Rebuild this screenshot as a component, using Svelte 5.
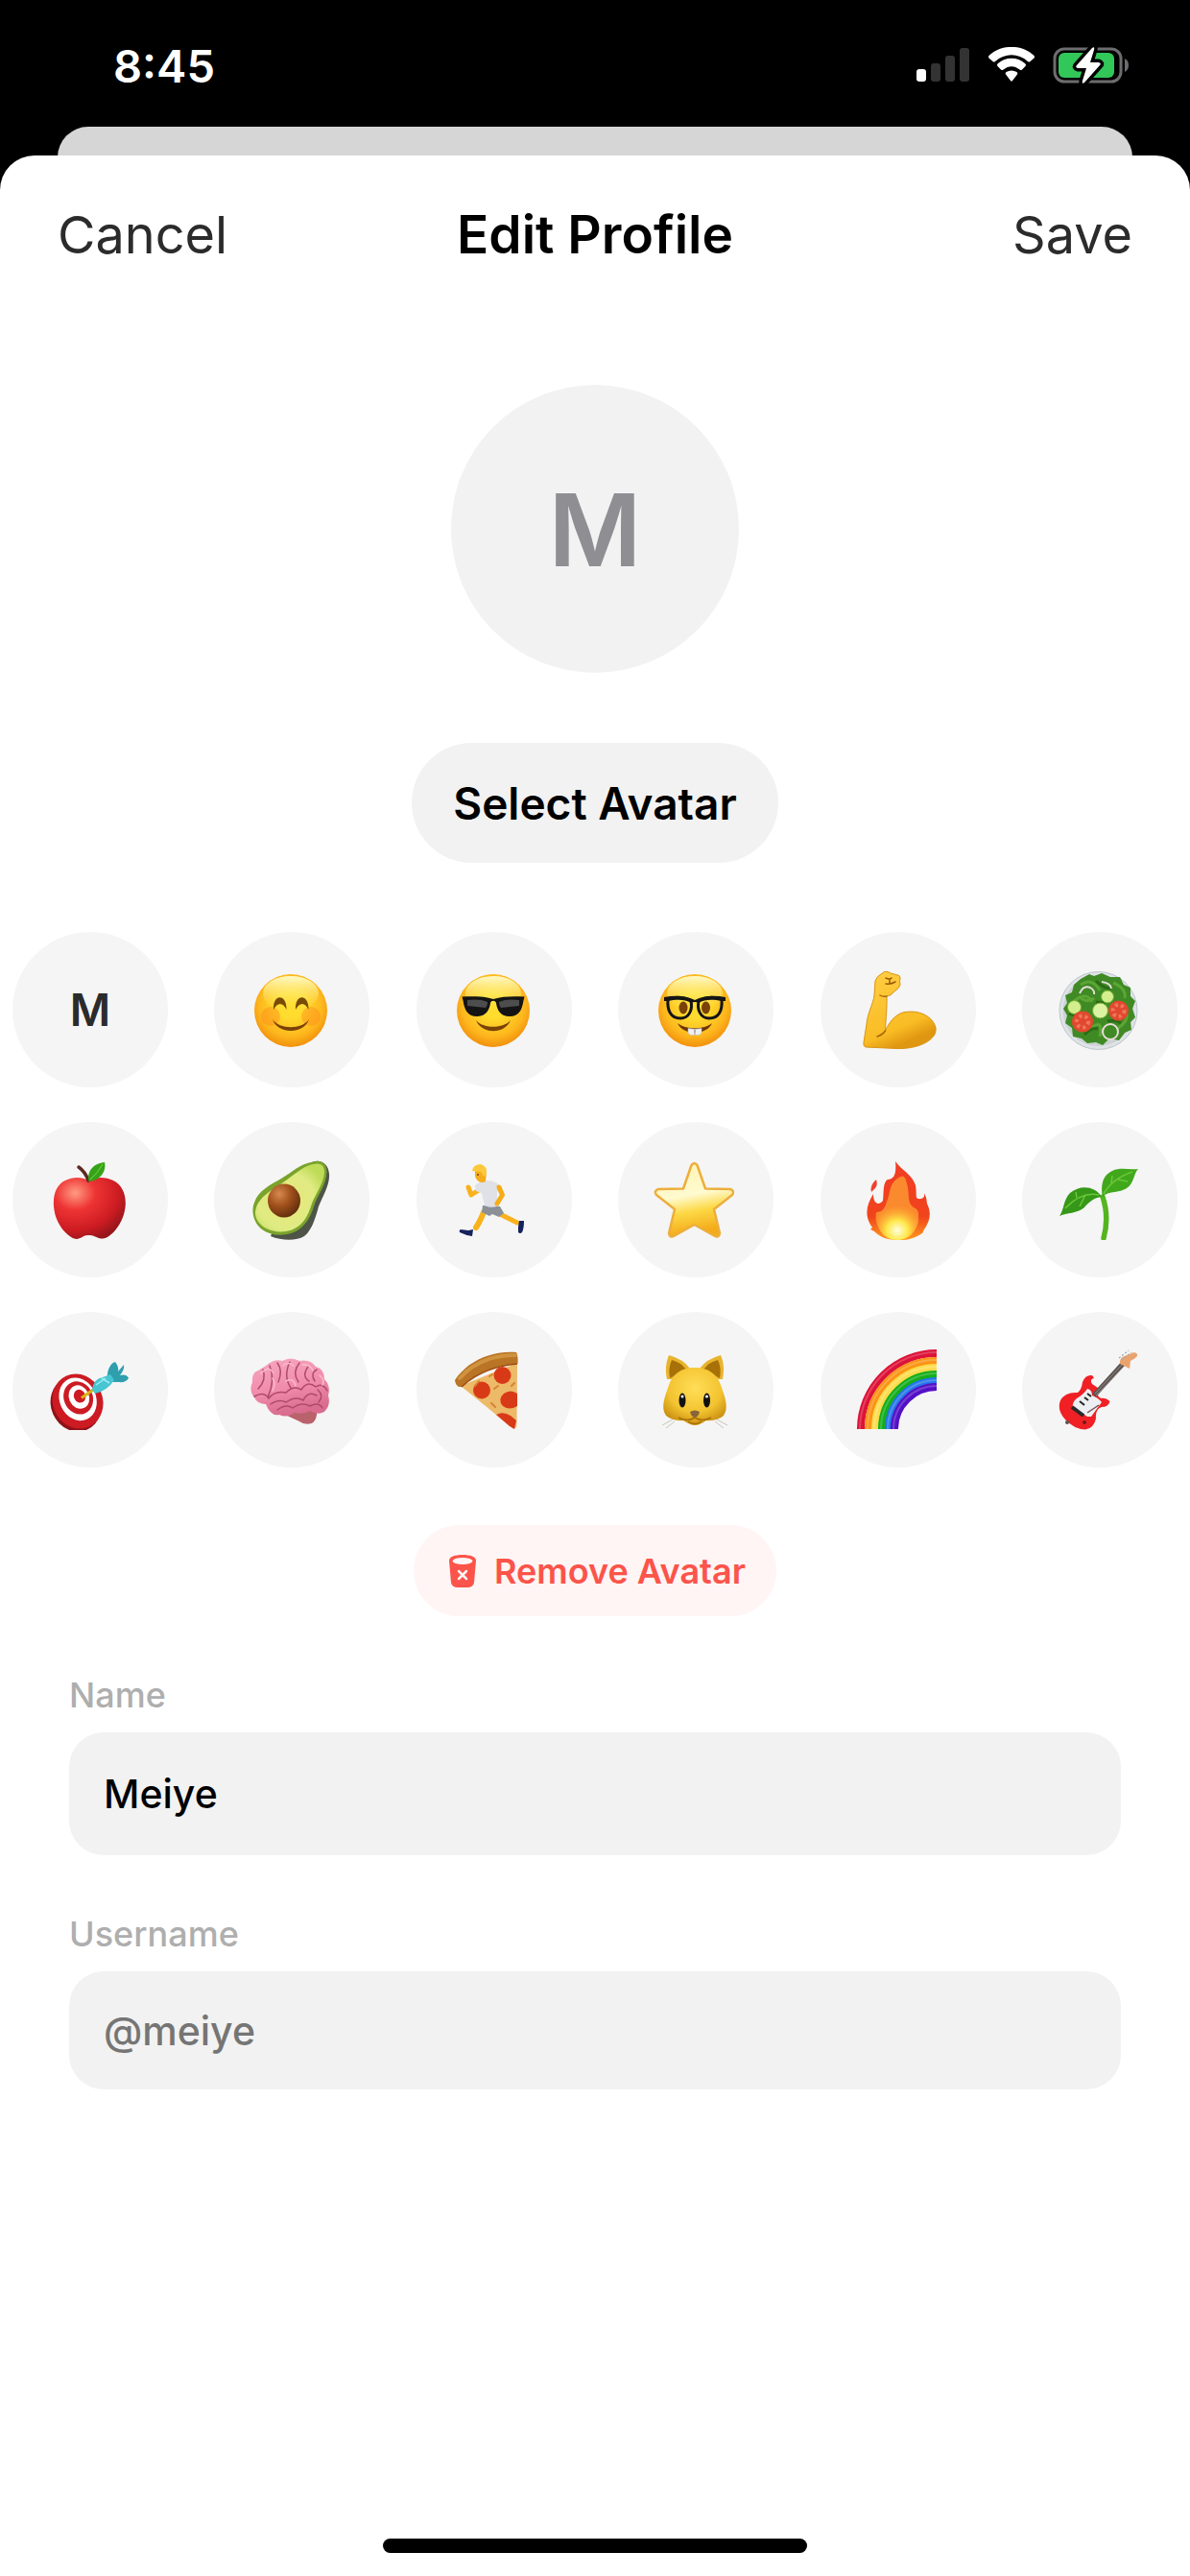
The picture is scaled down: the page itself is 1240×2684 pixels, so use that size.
<script>
    const avatars = [
        'initial', 'smile', 'sunglasses', 'nerd', 'muscle', 'salad',
        'apple', 'avocado', 'runner', 'star', 'fire', 'seedling',
        'target', 'brain', 'pizza', 'cat', 'rainbow', 'guitar'
    ];

    const rainbowBands = [
        { r: 79, color: '#dd1238' },
        { r: 71, color: '#fb9416' },
        { r: 64, color: '#fddc4c' },
        { r: 57, color: '#14ae1b' },
        { r: 50, color: '#2476ea' },
        { r: 44, color: '#5410c6' }
    ];

    let name = $state('Meiye');
    let username = $state('');
    let selected = $state('initial');

    let initial = $derived(name.trim().charAt(0).toUpperCase());

    function removeAvatar() {
        selected = 'initial';
    }
</script>

{#snippet face()}
    <circle cx="43" cy="43" r="38" fill="url(#face-edge)" />
    <ellipse cx="43" cy="25" rx="29" ry="18" fill="url(#face-shine)" />
{/snippet}

{#snippet picture(kind)}
    <svg class="emoji" viewBox="0 0 84 84" aria-hidden="true">
        {#if kind === 'smile'}
            {@render face()}
            <circle cx="22" cy="49" r="10" fill="#ff7a1a" opacity=".35" />
            <circle cx="64" cy="49" r="10" fill="#ff7a1a" opacity=".35" />
            <path d="M25 42C24 25 39 25 38.5 42C35 34 29 34 25 42Z" fill="#7a4a06" />
            <path d="M48 42C47 25 62 25 61.5 42C58 34 52 34 48 42Z" fill="#7a4a06" />
            <path d="M24 52C29 68 57 68 62 52C55 63 31 63 24 52Z" fill="#7a4206" />
        {:else if kind === 'sunglasses'}
            {@render face()}
            <path d="M10.5 28.5C22 28 34 28 43 31C52 28 64 28 75.5 28.5L74.5 32.5C73 42 70 49 60 49C51 49 47 43 46 35C45 32 41 32 40 35C39 43 35 49 26 49C16 49 13 42 11.5 32.5Z" fill="#141414" />
            <path d="M16 32C23 31 31 31 37 34C37 37 36 39 35 40L16 38Z" fill="#5b5b5b" opacity=".8" />
            <path d="M70 32C63 31 55 31 49 34C49 37 50 39 51 40L70 38Z" fill="#5b5b5b" opacity=".8" />
            <path d="M25 53C31 68 55 68 61 53C54 62 32 62 25 53Z" fill="#7a4206" />
        {:else if kind === 'nerd'}
            {@render face()}
            <ellipse cx="31" cy="40" rx="4.5" ry="6.5" fill="#7a4206" />
            <ellipse cx="54.5" cy="40" rx="4.5" ry="6.5" fill="#7a4206" />
            <path d="M25 56C30 69 56 69 61 56C53 63 33 63 25 56Z" fill="#6a3606" />
            <path d="M36 61.5Q43 63 50 61.5V66Q49 69 43.5 68.5V63H42.5V68.5Q37 69 36 66Z" fill="#f0f0f2" stroke="#b9bcc4" stroke-width=".6" />
            <path d="M15 31C24 28 34 29 39 33C41 42 37 51 28 51C18 51 14 43 15 31ZM71 31C62 28 52 29 47 33C45 42 49 51 58 51C68 51 72 43 71 31Z" fill="none" stroke="#141414" stroke-width="3" />
            <path d="M11 29C22 27 33 27 43 32C53 27 64 27 75 29V33L71 33C62 31 53 31 47 35Q43 33 39 35C33 31 24 31 15 33H11Z" fill="#141414" />
        {:else if kind === 'muscle'}
            <path d="M29.5 2.5Q33 1.5 36 4L45 6.5Q47 9 45.5 12L46 16Q45 20 40 23Q36 28 32 28C32.5 40 31 50 30.5 64C35 54 42 46 51 44.5C66 42 80 49 83 60.5Q84 66 80.5 70C72 80 55 83 42 82.5L10 81Q7 80 8 76L11 57C12 45 18 36 19 27L20 12Q22 7 26 5Z" fill="url(#muscle-skin)" stroke="#d99412" />
            <path d="M30.5 64Q28 68 22 70M32 28Q28 29 25 27" fill="none" stroke="#a8670a" stroke-width="1.5" stroke-linecap="round" />
            <path d="M31 9Q35 11 37 9M31 15Q36 16 41 13M35 10V15" fill="none" stroke="#96590a" stroke-width="1.5" stroke-linecap="round" />
        {:else if kind === 'salad'}
            <circle cx="42.5" cy="43" r="40.5" fill="#dfe3e8" stroke="#bcc5ca" />
            <circle cx="42.5" cy="43" r="37" fill="#ccd3d3" />
            <path d="M24 10L33 5L38 7L46 4L55 8L65 8L69 16L76 19L76 28L81 33L78 41L81 50L76 55L77 63L70 66L64 74L54 72L47 79L40 76L31 77L25 72L16 70L15 61L8 56L10 48L6 41L10 35L8 27L15 24L17 16Z" fill="#3f8a24" />
            <path d="M24 16Q36 8 44 22M58 14Q72 20 70 30M16 34Q30 22 36 34M34 62Q48 50 44 70M62 62Q74 54 72 46M22 28Q30 36 38 30" fill="none" stroke="#5ba634" stroke-width="3" />
            <path d="M40 12Q48 20 56 20M12 46Q20 50 24 44M40 34Q50 36 56 30M28 68Q36 60 42 62M66 56Q60 52 52 54" fill="none" stroke="#2a6c16" stroke-width="3" />
            <path d="M23 25Q27 16 34 19Q39 22 38 26M46 13Q55 14 56 20" fill="none" stroke="#e3dcd8" stroke-width="2" />
            <circle cx="17.5" cy="39.5" r="7" fill="#d3ee8e" stroke="#6dab2f" />
            <circle cx="52" cy="28.5" r="6.5" fill="#d3ee8e" stroke="#6dab2f" />
            <circle cx="44.5" cy="43" r="8" fill="#dcf3a2" stroke="#6dab2f" />
            <circle cx="26" cy="54.5" r="11" fill="#e0492f" />
            <circle cx="26" cy="54.5" r="6" fill="none" stroke="#ee775c" stroke-width="4" stroke-dasharray="3 3" />
            <circle cx="63.5" cy="43" r="10.5" fill="#e0492f" />
            <circle cx="63.5" cy="43" r="6" fill="none" stroke="#ee775c" stroke-width="4" stroke-dasharray="3 3" />
            <circle cx="55" cy="65" r="8" fill="none" stroke="#e8dcd8" stroke-width="2" />
        {:else if kind === 'apple'}
            <path d="M42.5 22C50 18 60 18 68 22C78 27 82 38 80.5 50C79 63 71 76 61 81.5C53 85 49 78 42.5 79C36 78 33 86 25 81.5C14 75 7 62 6 49C5 37 9 26 18 22C26 18 35 18 42.5 22Z" fill="url(#apple-skin)" />
            <path d="M32 8Q39 13 42 22" fill="none" stroke="#5c2a22" stroke-width="3.5" stroke-linecap="round" />
            <path d="M42.5 23C40 12 48 4 59 3C61 12 55 22 42.5 23Z" fill="#35a317" />
            <path d="M44 21Q52 14 57 5" fill="none" stroke="#7ed34f" />
        {:else if kind === 'avocado'}
            <path d="M66 2.5C75 0 82 5 83 15C84 26 76 39 72 49C69 60 65 74 57 80C49 85 34 85 22 80L40 40Z" fill="#4e5448" />
            <path d="M66 2.5C74 0 80 3 80.5 12C81 26 70 38 67 49C63 63 54 76 39 78C29 80 20 78 13 73C5 67 1 55 5 45C9 32 23 26 33 20C45 13 52 5 66 2.5Z" fill="#7aa32c" />
            <path d="M66 5C74 3 78 6 78 13C78 25 67 38 64 49C60 62 52 73 38 75C24 77 8 71 6 57C6 40 24 32 35 24C47 16 54 8 66 5Z" fill="url(#avocado-flesh)" />
            <ellipse cx="36" cy="43" rx="17" ry="17.5" fill="url(#avocado-pit)" />
        {:else if kind === 'runner'}
            <path d="M33 55Q29 65 25 71" fill="none" stroke="#f9b21c" stroke-width="6" stroke-linecap="round" />
            <path d="M50 57L68 66" fill="none" stroke="#f9b21c" stroke-width="5" stroke-linecap="round" />
            <path d="M22 73L21 80Q14 79 8 76Q7 74 9 73L17 74ZM70 64L75 64Q75 72 73 76Q71 78 69 76L69 70Z" fill="#15225c" />
            <path d="M17 29L20 37L28 32" fill="none" stroke="#f9b21c" stroke-width="5" stroke-linecap="round" stroke-linejoin="round" />
            <path d="M32 48L50 49L54 56L49 60L42 57L39 59L31 55Z" fill="#8b9097" />
            <path d="M24 27Q30 22 38 22Q47 23 50 28L47 34L47 49Q40 51 34 48L31 35L25 33Z" fill="#dfe1e6" />
            <path d="M49 29L52.5 37L47 46" fill="none" stroke="#f5ad18" stroke-width="5" stroke-linecap="round" stroke-linejoin="round" />
            <path d="M24 12L36 12L35 23Q29 26 25 20L24 17Z" fill="#f5ab1a" />
            <path d="M21 12Q22 5 30 5Q37 7 36 15L33 18L30 13Q26 13 21 12Z" fill="#fcc83c" />
            <circle cx="27" cy="16" r="1" fill="#7a4206" />
        {:else if kind === 'star'}
            <path d="M39.5 6Q42.5 2 45.5 6L54 30.5L80 31Q85 33 82 37L63 52L69 77Q68 82 64 80L42.5 68L21 80Q17 82 16 77L22 52L3 37Q0 33 5 31L31 30.5Z" fill="url(#star-fill)" stroke="#edae3d" stroke-width="2.5" stroke-linejoin="round" />
        {:else if kind === 'fire'}
            <path d="M41 2C47 11 59 16 62 27C64 37 60 42 68 41Q72 40 71 35Q74 40 74 46C80 58 75 67 71 73L69 77C59 84 50 84 43 84C31 84 24 80 19 75L15 73L17 71C8 59 11 47 18 36C18 47 24 48 28 43C29 32 28 24 33 21Q43 21 41 2Z" fill="url(#fire-outer)" />
            <path d="M43 20Q50 14 52 22C57 36 52 44 60 50Q66 52 65 60C67 71 57 82 44 82C31 82 18 73 21 55Q29 56 32 44C36 36 34 26 43 20Z" fill="#fb8a2e" />
            <ellipse cx="43" cy="64" rx="21" ry="20" fill="url(#fire-core)" />
            <path d="M21 21Q23 26 20 30L16 34Q14 27 21 21Z" fill="#f0412e" />
        {:else if kind === 'seedling'}
            <path d="M47 39Q54 60 48 82" fill="none" stroke="#54b520" stroke-width="5.5" stroke-linecap="round" />
            <path d="M47 40C45 28 46 17 57 12C65 8 74 11 84 10C79 15 80 25 72 30C63 36 51 32 47 40Z" fill="#41a81c" />
            <path d="M46 39C39 28 24 26 13 35C6 42 7 52 2 59C10 55 20 57 28 50C33 44 38 40 46 39Z" fill="#359818" />
            <path d="M48 36Q57 20 78 13M56 25L57 17M63 21L73 23M43 37Q25 33 8 51M29 37L23 49M20 40L19 34" fill="none" stroke="#6cc63a" stroke-width="1.5" />
        {:else if kind === 'target'}
            <g transform="rotate(-24 31 54)">
                <ellipse cx="28" cy="56" rx="26" ry="29" fill="#8f1218" />
                <ellipse cx="31" cy="54" rx="26" ry="29" fill="#cc1b23" />
                <ellipse cx="32" cy="52" rx="19" ry="23" fill="#fff" />
                <ellipse cx="33" cy="51" rx="15" ry="17.5" fill="#cc1b23" />
                <ellipse cx="34" cy="50.5" rx="10.5" ry="12.5" fill="#fff" />
                <ellipse cx="35" cy="50" rx="6" ry="7" fill="#cc1b23" />
            </g>
            <path d="M35 50.5L47 42" stroke="#d9b515" stroke-width="3" />
            <path d="M62 30C61 23 65 14 70 13Q74 18 73 23L79 16Q80 21 75 27Q82 25 84 30Q81 35 74 34L66 34Z" fill="#2f9fae" />
            <path d="M46 42Q47 31 57 29L65 26L69 32Q62 43 49 46Z" fill="#48c5d2" />
            <path d="M50 37L60 30M56 30L64 35" stroke="#99edf2" stroke-width="1.5" />
        {:else if kind === 'brain'}
            <path d="M45 60L70 63Q71 73 65 77Q57 79 52 75L37 68Z" fill="#b9626c" />
            <path d="M17 17Q26 9 34 12Q43 7 52 12Q63 10 69 18Q78 20 78 31Q85 38 82 48Q85 58 78 65Q71 69 63 64Q55 68 47 66Q39 72 31 68Q22 70 17 57Q8 57 5 50Q-1 43 3 34Q2 24 9 22Z" fill="url(#brain-tissue)" />
            <path d="M14 21Q18 32 9 41M21 17Q27 32 19 50M29 14Q35 22 30 34M42 13Q35 28 43 40M52 14Q44 24 51 34M61 18Q54 28 62 33M70 21Q63 25 68 33M5 49Q15 43 20 51Q26 43 38 45Q46 37 54 42Q60 32 69 39Q76 34 81 43M22 57Q31 51 38 55Q48 48 56 53Q61 43 70 48M29 63Q38 56 45 61Q54 54 63 59Q72 54 76 61M71 42Q78 48 72 55" fill="none" stroke="#b04a6c" stroke-width="1.5" stroke-linecap="round" />
            <path d="M12 25Q20 16 25 25M35 17Q40 12 46 17M55 16Q63 15 66 22M24 30Q28 36 24 43M38 33Q46 29 48 38M73 27Q79 32 76 37" fill="none" stroke="#fbb9cb" stroke-width="1.5" stroke-linecap="round" />
        {:else if kind === 'pizza'}
            <path d="M68 14L67.5 79Q66 85 62 81L9 38Z" fill="#ecba68" />
            <path d="M3 32C14 15 37 1 67 3Q69 6 68.5 15C46 16 25 25 10 39Q4 40 3 32Z" fill="#b97425" />
            <path d="M8 30C22 14 42 6 66 6" fill="none" stroke="#cf9340" stroke-width="4" stroke-linecap="round" />
            <path d="M10 39C25 25 46 17 68 15" fill="none" stroke="#9d4e13" stroke-width="1.5" />
            <circle cx="52.5" cy="27" r="9" fill="#d83a18" />
            <circle cx="31" cy="42.5" r="9" fill="#d83a18" />
            <path d="M68 46Q61 41 54 46Q47 52 53 59Q60 64 68 59ZM46 68Q53 64 61 69L67 74L65 83L60 80Z" fill="#d83a18" />
            <path d="M24 38L28 33M39 28L42 26M41 56L45 60M44 41L48 38M62 38L65 35" stroke="#d68532" stroke-width="2" stroke-linecap="round" />
        {:else if kind === 'cat'}
            <path d="M14 31C12 21 13 13 16 6Q31 10 38 20Q43 18 48 20Q55 10 70 6C73 13 74 21 72 31Z" fill="#e9b42d" />
            <path d="M17 30Q15 19 19 11Q28 13 34 21ZM69 30Q71 19 67 11Q58 13 52 21Z" fill="#a87108" />
            <path d="M43 19C58 19 66 26 70 37C74 49 79 60 73 69Q66 75 55 74Q48 79 43 79Q38 79 31 74Q20 75 13 69C7 60 12 49 16 37C20 26 28 19 43 19Z" fill="url(#cat-fur)" />
            <ellipse cx="30" cy="53" rx="3.5" ry="7.5" fill="#111" />
            <ellipse cx="55.5" cy="53" rx="3.5" ry="7.5" fill="#111" />
            <circle cx="30" cy="49" r="1.5" fill="#fff" />
            <circle cx="55.5" cy="49" r="1.5" fill="#fff" />
            <path d="M43 71Q35 76 26 71M43 71Q51 76 60 71M36 75Q43 80 50 75" fill="none" stroke="#a86e08" stroke-width="1.5" />
            <path d="M38 65Q43 62 48 65Q47 70 43 71Q39 70 38 65Z" fill="#88643b" />
            <path d="M20 73L9 79M22 75L13 82M66 73L77 79M64 75L73 82" stroke="#c9c6b9" />
        {:else if kind === 'rainbow'}
            {#each rainbowBands as band}
                <path d="M{84 - band.r} 83V82A{band.r} {band.r} 0 0 1 84 {83 - band.r}" fill="none" stroke={band.color} stroke-width="8" />
                <path d="M{83 - band.r} 83A{band.r + 1} {band.r + 1} 0 0 1 84 {82 - band.r}" fill="none" stroke="#fff" stroke-width="2" opacity=".2" />
            {/each}
        {:else if kind === 'guitar'}
            <path d="M36 27Q29 26 26 34Q25 42 21 45Q8 44 3 53Q-1 63 8 73Q17 83 29 83.5Q38 82 40 72Q39 62 46 60Q53 60 54.5 54Q50 50 46 51Q40 50 42 40L36 36Q33 31 38 30Z" fill="#f02025" />
            <path d="M31 41Q36 42 36 48Q42 50 46 55L35 70L31 70L16 60Q15 55 20 51Q27 47 31 41Z" fill="#edf0f2" />
            <path d="M38 48L68 15" stroke="#5c5350" stroke-width="5" />
            <path d="M39 46L68 15M40 48L70 17" stroke="#aaa39e" stroke-width=".7" />
            <path d="M65 15Q64 8 72 6L80 3Q86 5 81 9L76 12L75 20Z" fill="#eba36e" />
            <path d="M64 9L74 1M67 11L77 3" stroke="#aaa" stroke-width="1.5" stroke-dasharray="2 2" />
            <path d="M23 54L28 58M28 50L32 53M31 46L35 49" stroke="#252525" stroke-width="2" />
            <path d="M15 60L27 69" stroke="#2b2b2b" stroke-width="4" />
            <path d="M43 58L31 66" stroke="#7a5054" stroke-width="1.5" />
            <circle cx="28" cy="76" r="2" fill="#74191b" />
            <circle cx="10" cy="76" r="2" fill="#555" />
        {/if}
    </svg>
{/snippet}

<svg class="defs" width="0" height="0" aria-hidden="true">
    <defs>
        <radialGradient id="face-edge" cx=".5" cy=".42" r=".6">
            <stop offset=".3" stop-color="#ffdc2e" />
            <stop offset=".72" stop-color="#fdb71d" />
            <stop offset="1" stop-color="#f08a0a" />
        </radialGradient>
        <linearGradient id="face-shine" x2="0" y2="1">
            <stop stop-color="#fffbc8" />
            <stop offset="1" stop-color="#ffe84d" stop-opacity="0" />
        </linearGradient>
        <linearGradient id="muscle-skin" x2=".4" y2="1">
            <stop stop-color="#ffcf45" />
            <stop offset=".8" stop-color="#f9bc24" />
            <stop offset="1" stop-color="#df9611" />
        </linearGradient>
        <radialGradient id="apple-skin" cx=".3" cy=".25" r=".8">
            <stop stop-color="#ff9b82" />
            <stop offset=".35" stop-color="#ee3434" />
            <stop offset=".75" stop-color="#cd1c22" />
            <stop offset="1" stop-color="#97161c" />
        </radialGradient>
        <radialGradient id="avocado-flesh" cx=".45" cy=".55" r=".6">
            <stop stop-color="#e9e77b" />
            <stop offset=".7" stop-color="#dfeb82" />
            <stop offset="1" stop-color="#bfdc58" />
        </radialGradient>
        <radialGradient id="avocado-pit" cx=".35" cy=".3" r=".7">
            <stop stop-color="#d58a50" />
            <stop offset=".5" stop-color="#a3521d" />
            <stop offset="1" stop-color="#67300e" />
        </radialGradient>
        <linearGradient id="star-fill" x2=".2" y2="1">
            <stop stop-color="#fff3b0" />
            <stop offset=".5" stop-color="#fffad0" />
            <stop offset=".72" stop-color="#fdd946" />
            <stop offset="1" stop-color="#f4ab1a" />
        </linearGradient>
        <linearGradient id="fire-outer" x2="0" y2="1">
            <stop stop-color="#f13c26" />
            <stop offset=".7" stop-color="#f0441c" />
            <stop offset="1" stop-color="#ff9a20" />
        </linearGradient>
        <radialGradient id="fire-core" cx=".5" cy=".75" r=".65">
            <stop stop-color="#fffde0" />
            <stop offset=".4" stop-color="#ffe94c" />
            <stop offset="1" stop-color="#fdb22c" stop-opacity="0" />
        </radialGradient>
        <linearGradient id="brain-tissue" x2=".3" y2="1">
            <stop stop-color="#f7a9c0" />
            <stop offset=".6" stop-color="#f08bab" />
            <stop offset="1" stop-color="#d96c8f" />
        </linearGradient>
        <radialGradient id="cat-fur" cx=".5" cy=".35" r=".65">
            <stop stop-color="#ffde58" />
            <stop offset=".65" stop-color="#f3c330" />
            <stop offset="1" stop-color="#cb9212" />
        </radialGradient>
    </defs>
</svg>

<div class="screen">
    <div class="status-bar">
        <span class="time">8:45</span>
        <div class="status-icons">
            <svg width="56" height="38" viewBox="0 0 56 38" role="img" aria-label="Signal">
                <rect x="0" y="23" width="10" height="13" rx="3" fill="#fff" />
                <rect x="15" y="17" width="10" height="19" rx="3" fill="#333" />
                <rect x="30" y="9" width="10" height="27" rx="3" fill="#333" />
                <rect x="45" y="1" width="10" height="35" rx="3" fill="#333" />
            </svg>
            <svg width="48" height="38" viewBox="0 0 48 38" fill="#fff" role="img" aria-label="Wi-Fi">
                <path d="M1 12Q-1 10 1 8.5C14-3 34-3 47 8.5Q49 10 47 12L43.5 15Q42.5 16 41 15C31 6 17 6 7 15Q5.500 16 4.500 15Z" />
                <path d="M9.500 20Q8 18.500 10 17C18 10 30 10 38 17Q40 18.500 38.500 20L35 23.500Q34 24.500 32.500 23.500C27 19 21 19 15.500 23.500Q14 24.500 13 23.500Z" />
                <path d="M18 28.500Q17 27 18.500 26C22 24 26 24 29.500 26Q31 27 30 28.500L25 35Q24 36.500 23 35Z" />
            </svg>
            <svg width="79" height="38" viewBox="0 0 79 38" role="img" aria-label="Battery charging">
                <rect x="2" y="2" width="69" height="34" rx="10" fill="none" stroke="#6d6d70" stroke-width="3" />
                <path d="M75 12Q79 14 79 19Q79 24 75 26Z" fill="#6d6d70" />
                <rect x="6" y="6" width="58" height="26" rx="6" fill="#32c759" />
                <path d="M41 1Q44-1 43 3L39 16H48Q51 17 49 19L33 37Q30 39 31 35L35 22H26Q23 21 25 19Z" fill="#fff" stroke="#000" stroke-width="7" stroke-linejoin="round" />
                <path d="M41 1Q44-1 43 3L39 16H48Q51 17 49 19L33 37Q30 39 31 35L35 22H26Q23 21 25 19Z" fill="#fff" />
            </svg>
        </div>
    </div>

    <div class="back-card"></div>

    <main class="sheet">
        <header class="sheet-header">
            <button type="button" class="header-button">Cancel</button>
            <h1>Edit Profile</h1>
            <button type="button" class="header-button save">Save</button>
        </header>

        <div class="preview">
            {#if selected === 'initial'}
                {initial}
            {:else}
                {@render picture(selected)}
            {/if}
        </div>

        <button type="button" class="select-button">Select Avatar</button>

        <div class="avatar-grid">
            {#each avatars as avatar}
                <button
                    type="button"
                    class="avatar"
                    class:letter={avatar === 'initial'}
                    aria-label={avatar}
                    onclick={() => (selected = avatar)}
                >
                    {#if avatar === 'initial'}
                        {initial}
                    {:else}
                        {@render picture(avatar)}
                    {/if}
                </button>
            {/each}
        </div>

        <button type="button" class="remove-button" onclick={removeAvatar}>
            <svg width="30" height="36" viewBox="0 0 30 36" aria-hidden="true">
                <path d="M1 7C1 3 7 1 15 1S29 3 29 7L27 30Q26 35 20 35H10Q4 35 3 30Z" fill="#fb544a" />
                <ellipse cx="15" cy="7.5" rx="10.5" ry="3.5" fill="#fff5f5" />
                <path d="M11 18L19 26M19 18L11 26" stroke="#fff5f5" stroke-width="2.5" stroke-linecap="round" />
            </svg>
            Remove Avatar
        </button>

        <form class="fields">
            <div class="field">
                <label for="name">Name</label>
                <input id="name" type="text" bind:value={name} />
            </div>
            <div class="field">
                <label for="username">Username</label>
                <input id="username" class="handle" type="text" placeholder="@meiye" bind:value={username} />
            </div>
        </form>

        <div class="home-indicator"></div>
    </main>
</div>

<style>
    :global(body) {
        background: #000;
    }

    .screen,
    .screen button,
    .screen input {
        font-family: Inter, "Liberation Sans", sans-serif;
    }

    .screen {
        display: flex;
        flex-direction: column;
        min-height: 100vh;
        background: #000;
    }

    button {
        border: none;
        padding: 0;
        background: none;
        cursor: pointer;
    }

    .defs {
        position: absolute;
    }

    .status-bar {
        display: flex;
        justify-content: space-between;
        align-items: center;
        height: 132px;
        padding: 4px 64px 0 118px;
        box-sizing: border-box;
        color: #fff;
    }

    .time {
        font-size: 47px;
        font-weight: 600;
    }

    .status-icons {
        display: flex;
        align-items: center;
        gap: 19px;
    }

    .back-card {
        height: 62px;
        margin: 0 60px -32px;
        border-radius: 32px 32px 0 0;
        background: #d6d6d6;
    }

    .sheet {
        flex: 1;
        display: flex;
        flex-direction: column;
        align-items: center;
        padding-bottom: 24px;
        border-radius: 36px 36px 0 0;
        background: #fff;
    }

    .sheet-header {
        align-self: stretch;
        display: grid;
        grid-template-columns: 1fr auto 1fr;
        align-items: center;
        height: 164px;
        padding: 0 60px;
    }

    .header-button {
        justify-self: start;
        font-size: 54px;
        color: #2b2b2c;
    }

    .save {
        justify-self: end;
    }

    h1 {
        margin: 0;
        font-size: 55px;
        font-weight: 600;
        color: #000;
    }

    .preview {
        display: flex;
        justify-content: center;
        align-items: center;
        width: 300px;
        height: 300px;
        margin-top: 75px;
        border-radius: 50%;
        background: #f2f2f2;
        color: #8e8e93;
        font-size: 105px;
        font-weight: 600;
    }

    .preview .emoji {
        width: 168px;
        height: 168px;
    }

    .select-button {
        height: 125px;
        margin-top: 73px;
        padding: 0 43px;
        border-radius: 63px;
        background: #f2f2f2;
        color: #000;
        font-size: 46px;
        font-weight: 600;
    }

    .avatar-grid {
        align-self: stretch;
        display: grid;
        grid-template-columns: repeat(6, 162px);
        justify-content: space-between;
        row-gap: 36px;
        margin-top: 72px;
        padding: 0 13px;
    }

    .avatar {
        display: flex;
        justify-content: center;
        align-items: center;
        height: 162px;
        padding-right: 4px;
        border-radius: 50%;
        background: #f5f5f5;
    }

    .letter {
        padding-right: 0;
        color: #2b2b2c;
        font-size: 46px;
        font-weight: 600;
    }

    .emoji {
        width: 84px;
        height: 84px;
    }

    .remove-button {
        display: flex;
        align-items: center;
        gap: 18px;
        height: 95px;
        margin-top: 60px;
        padding: 0 32px 0 36px;
        border-radius: 48px;
        background: #fff5f5;
        color: #fb544a;
        font-size: 36px;
        font-weight: 600;
    }

    .fields {
        align-self: stretch;
        display: flex;
        flex-direction: column;
        gap: 60px;
        margin: 60px 72px 0;
    }

    .field {
        display: flex;
        flex-direction: column;
        gap: 17px;
    }

    label {
        color: #aeaeae;
        font-size: 36px;
        font-weight: 500;
        line-height: 44px;
    }

    input {
        height: 128px;
        padding: 0 36px;
        border: none;
        border-radius: 36px;
        outline: none;
        background: #f2f2f2;
        color: #000;
        font-size: 41px;
        font-weight: 500;
    }

    .handle {
        height: 123px;
    }

    input::placeholder {
        color: #757575;
        opacity: 1;
    }

    .home-indicator {
        width: 442px;
        height: 15px;
        margin-top: auto;
        border-radius: 8px;
        background: #000;
    }
</style>
